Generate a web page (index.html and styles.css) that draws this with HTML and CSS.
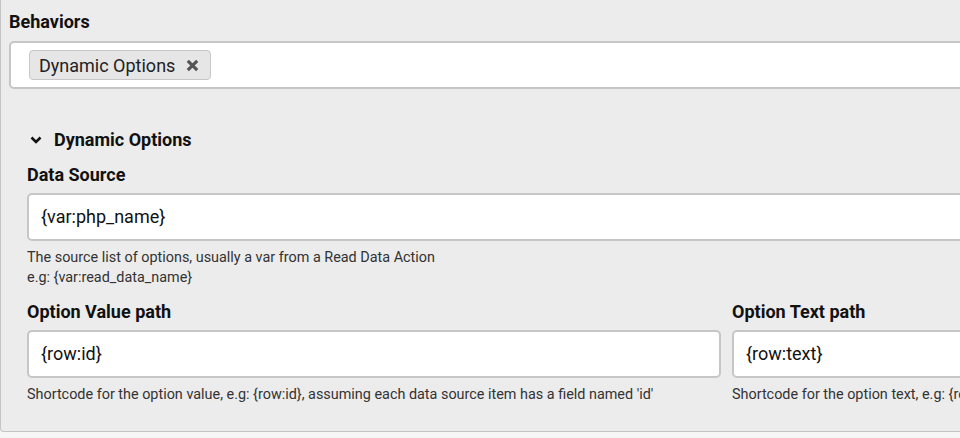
FILE: index.html
```html
<!DOCTYPE html>
<html lang="en">
<head>
<meta charset="utf-8">
<title>Behaviors</title>
<link rel="stylesheet" href="styles.css">
</head>
<body>
<div class="panel">
  <div class="label top-label">Behaviors</div>
  <div class="tagbox">
    <span class="chip">Dynamic Options
      <svg class="chip-x" width="13" height="13" viewBox="0 0 13 13"><path d="M1.8 1.8 L11.2 11.2 M11.2 1.8 L1.8 11.2" stroke="#555" stroke-width="3.1" stroke-linecap="butt"/></svg>
    </span>
  </div>
  <div class="section">
    <div class="section-head">
      <svg class="chev" width="12" height="8" viewBox="0 0 12 8"><path d="M1.5 1.5 L6 6 L10.5 1.5" fill="none" stroke="#111" stroke-width="2.6"/></svg>
      <span>Dynamic Options</span>
    </div>
    <div class="field">
      <div class="label">Data Source</div>
      <div class="input">{var:php_name}</div>
      <div class="help">The source list of options, usually a var from a Read Data Action<br>e.g: {var:read_data_name}</div>
    </div>
    <div class="row">
      <div class="field">
        <div class="label">Option Value path</div>
        <div class="input">{row:id}</div>
        <div class="help">Shortcode for the option value, e.g: {row:id}, assuming each data source item has a field named 'id'</div>
      </div>
      <div class="field">
        <div class="label">Option Text path</div>
        <div class="input">{row:text}</div>
        <div class="help">Shortcode for the option text, e.g: {row:text}, assuming each data source item has a field named 'text'</div>
      </div>
    </div>
  </div>
</div>
</body>
</html>
```
FILE: styles.css
```css
html, body {
  margin: 0;
  padding: 0;
}
body {
  background: #f6f6f6;
  width: 960px;
  height: 438px;
  overflow: hidden;
  font-family: Roboto, "Liberation Sans", sans-serif;
  color: #111;
}
.panel {
  width: 1500px;
  box-sizing: border-box;
  margin-top: -10px;
  height: 442px;
  padding: 20px 0 0 9px;
  background: #ececec;
  border: 1px solid #c4c4c4;
  border-top: none;
  border-radius: 0 0 4px 4px;
}
.label {
  font-size: 18px;
  font-weight: 700;
  line-height: 22px;
}
.top-label {
  padding-top: 1px;
  margin-bottom: 8px;
  margin-left: -1px;
}
.tagbox {
  box-sizing: border-box;
  height: 48px;
  background: #fff;
  border: 2px solid #c6c6c6;
  border-radius: 5px;
  display: flex;
  align-items: center;
  padding-left: 18px;
  margin-left: -1px;
}
.chip {
  display: inline-flex;
  align-items: center;
  box-sizing: border-box;
  height: 30px;
  padding: 0 11px 0 9px;
  background: #e6e6e6;
  border: 1px solid #c6c6c6;
  border-radius: 4px;
  font-size: 18px;
  color: #222;
}
.chip-x {
  margin-left: 11px;
}
.section {
  margin: 38px 0 0 17px;
}
.section-head {
  display: flex;
  align-items: center;
  height: 22px;
  padding-top: 1px;
  font-size: 18px;
  font-weight: 700;
  margin-bottom: 13px;
}
.chev {
  margin: 1px 12px 0 3px;
}
.field .label {
  padding-top: 1px;
  margin-bottom: 7px;
}
.input {
  box-sizing: border-box;
  height: 48px;
  background: #fff;
  border: 2px solid #c6c6c6;
  border-radius: 5px;
  padding-left: 12px;
  font-size: 18px;
  line-height: 44px;
  color: #111;
}
.help {
  margin-top: 7px;
  font-size: 14.4px;
  line-height: 20px;
  color: #333;
  white-space: nowrap;
}
.row {
  display: grid;
  grid-template-columns: 694px 694px;
  column-gap: 11px;
  margin-top: 12px;
}
```
